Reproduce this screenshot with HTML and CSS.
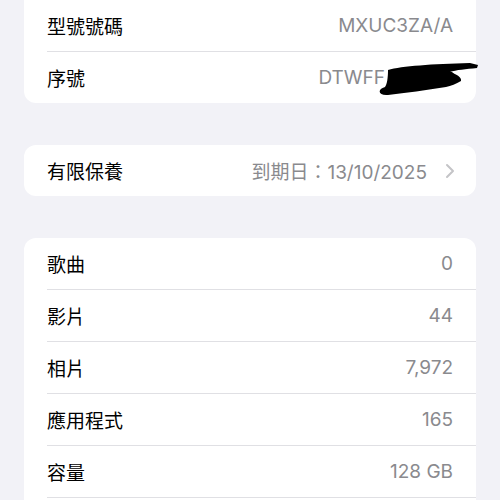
FILE: index.html
```html
<!DOCTYPE html>
<html lang="zh-Hant">
<head>
    <meta charset="UTF-8">
    <meta name="viewport" content="width=device-width, initial-scale=1.0">
    <title>關於本機</title>
    <link rel="stylesheet" href="styles.css">
</head>
<body>
    <div class="page">
        <div class="card top-card">
            <div class="row">
                <span class="label">型號號碼</span>
                <span class="value">MXUC3ZA/A</span>
            </div>
            <div class="row">
                <span class="label">序號</span>
                <span class="value">DTWFF<span class="hidden-part"></span></span>
                <svg class="scribble" width="104" height="40" viewBox="0 0 104 40">
                    <path d="M12 10 C26 6 56 4 94 3 L102 5 L101 8 C90 9 80 10 74 12 C80 14 86 17 85 21 C80 24 75 26 70 27 C50 30 30 33 12 35 C2 36 1 29 9 27 C11 24 12 18 12 10 Z" fill="#000"/>
                    <path d="M14 14 C30 13 60 11 76 12 L84 20 C60 23 36 26 16 28 Z" fill="#000"/>
                </svg>
            </div>
        </div>

        <div class="card">
            <div class="row link">
                <span class="label">有限保養</span>
                <span class="value">到期日：13/10/2025</span>
                <svg class="chevron" width="10" height="16" viewBox="0 0 10 16">
                    <path d="M2 2 L8 8 L2 14" fill="none" stroke="#c4c4c7" stroke-width="2" stroke-linecap="round" stroke-linejoin="round"/>
                </svg>
            </div>
        </div>

        <div class="card continues">
            <div class="row">
                <span class="label">歌曲</span>
                <span class="value">0</span>
            </div>
            <div class="row">
                <span class="label">影片</span>
                <span class="value">44</span>
            </div>
            <div class="row">
                <span class="label">相片</span>
                <span class="value">7,972</span>
            </div>
            <div class="row">
                <span class="label">應用程式</span>
                <span class="value">165</span>
            </div>
            <div class="row">
                <span class="label">容量</span>
                <span class="value">128 GB</span>
            </div>
        </div>
    </div>
</body>
</html>
```

FILE: styles.css
```css
body {
    margin: 0;
    padding: 0;
    background-color: #f2f2f7;
    font-family: Inter, "Noto Sans CJK TC", sans-serif;
    font-size: 19px;
    overflow: hidden;
}

.page {
    padding: 0 24px;
}

.card {
    background-color: #fff;
    border-radius: 12px;
    margin-bottom: 42px;
}

.top-card {
    margin-top: -12px;
    padding-top: 12px;
}

.continues {
    padding-bottom: 20px;
}

.row {
    position: relative;
    display: flex;
    align-items: center;
    justify-content: space-between;
    height: 51px;
    margin-left: 23px;
    padding-right: 23px;
    border-bottom: 1px solid #e0e0e4;
}

.row:last-child {
    border-bottom: none;
}

.continues .row:last-child {
    border-bottom: 1px solid #e0e0e4;
}

.label {
    color: #000;
    font-family: "Noto Sans CJK TC", sans-serif;
}

.value {
    color: #8a8a8e;
    margin-left: auto;
}

.hidden-part {
    display: inline-block;
    width: 68px;
}

.scribble {
    position: absolute;
    left: 329px;
    top: 8px;
}

.chevron {
    margin-left: 18px;
    margin-right: -2px;
}
```
